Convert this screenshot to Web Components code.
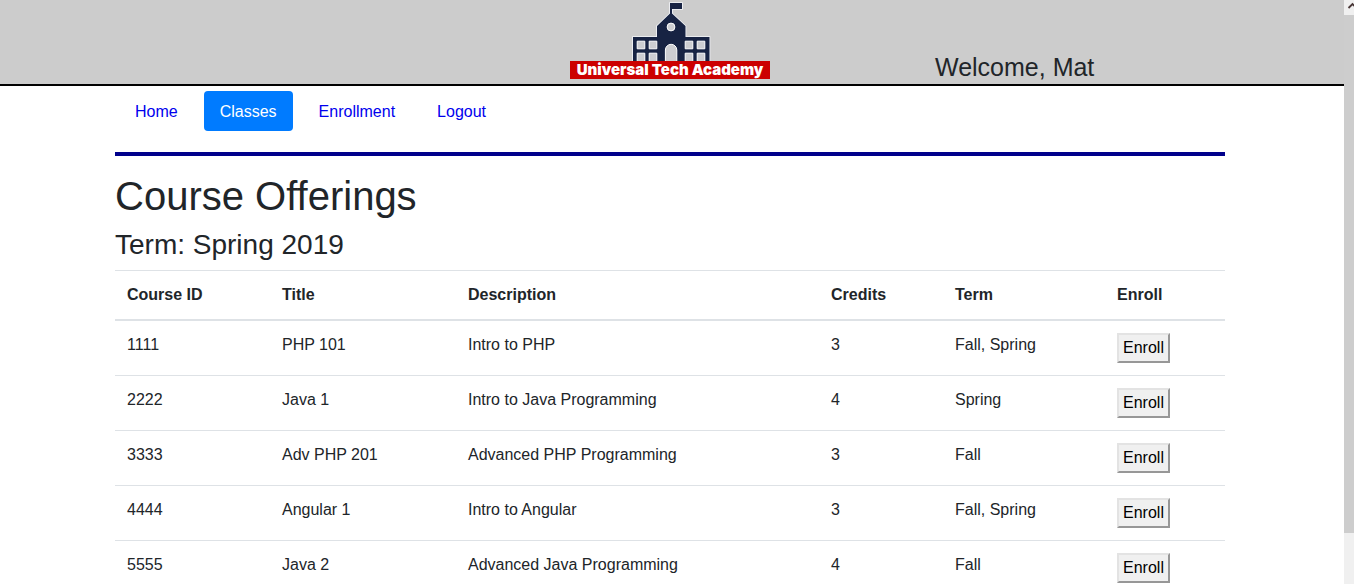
<!DOCTYPE html>
<html lang="en">
<head>
<meta charset="utf-8">
<title>Universal Tech Academy</title>
<style>
  body { margin: 0; font: 16px/24px "Liberation Sans", Arial, sans-serif; color: #212529; background: #fff; }
</style>
</head>
<body>
<app-shell>
  <site-header user="Mat"></site-header>
  <page-container>
    <site-nav current="Classes"></site-nav>
    <course-list term="Spring 2019"></course-list>
  </page-container>
</app-shell>

<script>
class BaseElement extends HTMLElement {
  connectedCallback() {
    if (this.shadowRoot) return;
    this.attachShadow({ mode: "open" }).innerHTML = this.render();
  }
}

customElements.define("app-shell", class extends BaseElement {
  render() {
    return `
      <style>
        :host { display: grid; grid-template-columns: minmax(0, 1fr) 10px; height: 100vh; }
        .view { overflow-y: auto; scrollbar-width: none; }
      </style>
      <div class="view"><slot></slot></div>
      <scroll-rail></scroll-rail>`;
  }
});

customElements.define("scroll-rail", class extends BaseElement {
  render() {
    return `
      <style>
        :host { display: flex; flex-direction: column; background: #f0f0f0; overflow: hidden; }
        svg { display: block; width: 16px; height: 15px; flex: none; }
        .track { flex: 1; }
        .thumb { height: 91%; background: #cdcdcd; }
      </style>
      <svg viewBox="0 0 16 15" aria-hidden="true"><path d="M4.500 8 8.500 4 12.500 8" fill="none" stroke="#4a3838" stroke-width="1.800"/></svg>
      <div class="track"><div class="thumb"></div></div>`;
  }
});

customElements.define("page-container", class extends BaseElement {
  render() {
    return `
      <style>
        :host { display: block; max-width: 1110px; margin: 0 auto; padding: 0 19px 0 15px; }
      </style>
      <slot></slot>`;
  }
});

customElements.define("academy-logo", class extends BaseElement {
  render() {
    return `
      <style>
        :host { display: block; width: 200px; }
        svg { display: block; width: 200px; height: 61px; }
        .name { background: #c00; color: #fff; text-align: center; white-space: nowrap;
                font: 900 15px/18px Inter, sans-serif; }
      </style>
      <svg viewBox="0 0 200 61" aria-hidden="true">
        <path d="M100 3h12v6h-10v4.500l13.500 12.500v11h24v24H63V37h24V26l13-12.500z" fill="#172343" stroke="#f4f6fa" stroke-width="1.600" paint-order="stroke"/>
        <g fill="#cccdd1" stroke="#fff">
          <path d="M67.200 41.200h7.600v7.600h-7.600zM79.200 41.200h7.600v7.600h-7.600zM67.200 53.200h7.600V62h-7.600zM79.200 53.200h7.600V62h-7.600z"/>
          <path d="M115.200 41.200h7.600v7.600h-7.600zM127.200 41.200h7.600v7.600h-7.600zM115.200 53.200h7.600V62h-7.600zM127.200 53.200h7.600V62h-7.600z"/>
          <path d="M95.400 62V50a5.700 5.700 0 0 1 11.400 0v12z"/>
          <circle cx="101" cy="27" r="3.900"/>
        </g>
      </svg>
      <div class="name">Universal Tech Academy</div>`;
  }
});

customElements.define("site-header", class extends BaseElement {
  render() {
    return `
      <style>
        :host { display: block; background: #ccc; border-bottom: 2px solid #000; }
        .row { display: grid; grid-template-columns: 1fr auto 1fr; align-items: end; padding: 0 4px 5px 0; }
        .welcome { padding-left: 165px; font-size: 25px; line-height: 24px; white-space: nowrap; }
      </style>
      <header class="row">
        <span></span>
        <academy-logo></academy-logo>
        <div class="welcome">Welcome, ${this.getAttribute("user")}</div>
      </header>`;
  }
});

customElements.define("site-nav", class extends BaseElement {
  render() {
    const current = this.getAttribute("current");
    const items = ["Home", "Classes", "Enrollment", "Logout"].map(name =>
      `<li><a href="#${name.toLowerCase()}"${name === current ? ' aria-current="page"' : ""}>${name}</a></li>`).join("");
    return `
      <style>
        :host { display: block; padding-top: 5px; border-bottom: 4px solid #00008b; }
        ul { display: flex; gap: 10px; list-style: none; margin: 0; padding: 0 4px 21px; }
        a { display: block; padding: 9px 16px 7px; border-radius: 4px; color: #00e; text-decoration: none; }
        a[aria-current] { background: #007bff; color: #fff; }
      </style>
      <nav><ul>${items}</ul></nav>`;
  }
});

const COURSES = [
  ["1111", "PHP 101", "Intro to PHP", 3, "Fall, Spring"],
  ["2222", "Java 1", "Intro to Java Programming", 4, "Spring"],
  ["3333", "Adv PHP 201", "Advanced PHP Programming", 3, "Fall"],
  ["4444", "Angular 1", "Intro to Angular", 3, "Fall, Spring"],
  ["5555", "Java 2", "Advanced Java Programming", 4, "Fall"]
];

customElements.define("course-list", class extends BaseElement {
  render() {
    const widths = [155, 186, 363, 124, 162, 120];
    const heads = ["Course ID", "Title", "Description", "Credits", "Term", "Enroll"];
    const rows = COURSES.map(c =>
      `<tr>${c.map(v => `<td>${v}</td>`).join("")}<td><button type="button">Enroll</button></td></tr>`).join("");
    return `
      <style>
        :host { display: block; padding-top: 16px; }
        h1, h2 { margin: 0 0 8px; font-weight: 400; }
        h1 { font-size: 40px; line-height: 48px; }
        h2 { font-size: 28px; line-height: 34px; }
        table { width: 100%; table-layout: fixed; border-collapse: collapse; }
        th, td { padding: 12px; text-align: left; vertical-align: top; border-top: 1px solid #dee2e6; }
        thead th { border-bottom: 2px solid #dee2e6; }
        button { display: block; box-sizing: border-box; width: 53px; height: 30px; margin: 0; padding: 0;
                 border: 2px solid; border-color: #e3e3e3 #979797 #979797 #e3e3e3;
                 background: #f0f0f0; color: #000; font: inherit; }
      </style>
      <h1>Course Offerings</h1>
      <h2>Term: ${this.getAttribute("term")}</h2>
      <table>
        <colgroup>${widths.map(w => `<col style="width:${w}px">`).join("")}</colgroup>
        <thead><tr>${heads.map(h => `<th scope="col">${h}</th>`).join("")}</tr></thead>
        <tbody>${rows}</tbody>
      </table>`;
  }
});
</script>
</body>
</html>
